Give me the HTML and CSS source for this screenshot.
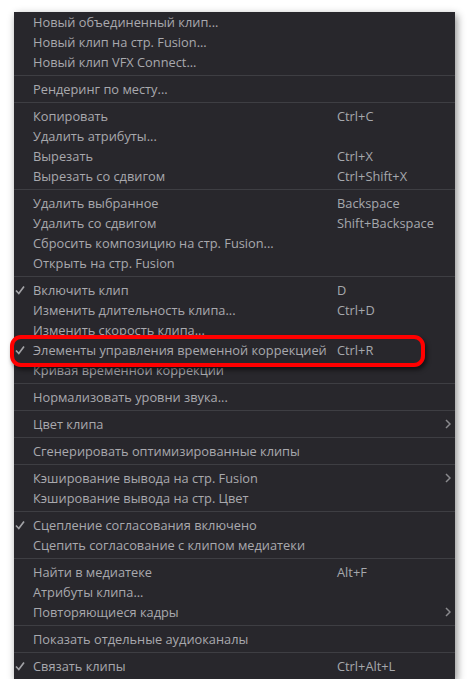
FILE: index.html
```html
<!DOCTYPE html>
<html lang="ru">
<head>
    <meta charset="UTF-8">
    <meta name="viewport" content="width=device-width, initial-scale=1.0">
    <title>Контекстное меню клипа</title>
    <link rel="stylesheet" href="styles.css">
</head>
<body>
    <div class="menu">
        <div class="item"><span class="check"></span><span class="label">Новый объединенный клип...</span></div>
        <div class="item"><span class="check"></span><span class="label">Новый клип на стр. Fusion...</span></div>
        <div class="item"><span class="check"></span><span class="label">Новый клип VFX Connect...</span></div>
        <div class="sep"></div>
        <div class="item"><span class="check"></span><span class="label">Рендеринг по месту...</span></div>
        <div class="sep"></div>
        <div class="item"><span class="check"></span><span class="label">Копировать</span><span class="key">Ctrl+C</span></div>
        <div class="item"><span class="check"></span><span class="label">Удалить атрибуты...</span></div>
        <div class="item"><span class="check"></span><span class="label">Вырезать</span><span class="key">Ctrl+X</span></div>
        <div class="item"><span class="check"></span><span class="label">Вырезать со сдвигом</span><span class="key">Ctrl+Shift+X</span></div>
        <div class="sep"></div>
        <div class="item"><span class="check"></span><span class="label">Удалить выбранное</span><span class="key">Backspace</span></div>
        <div class="item"><span class="check"></span><span class="label">Удалить со сдвигом</span><span class="key">Shift+Backspace</span></div>
        <div class="item"><span class="check"></span><span class="label">Сбросить композицию на стр. Fusion...</span></div>
        <div class="item"><span class="check"></span><span class="label">Открыть на стр. Fusion</span></div>
        <div class="sep"></div>
        <div class="item"><span class="check"><svg width="10" height="10" viewBox="0 0 10 10"><polyline points="1,5.5 3.8,8.5 9,1.5"/></svg></span><span class="label">Включить клип</span><span class="key">D</span></div>
        <div class="item"><span class="check"></span><span class="label">Изменить длительность клипа...</span><span class="key">Ctrl+D</span></div>
        <div class="item"><span class="check"></span><span class="label">Изменить скорость клипа...</span></div>
        <div class="item"><span class="check"><svg width="10" height="10" viewBox="0 0 10 10"><polyline points="1,5.5 3.8,8.5 9,1.5"/></svg></span><span class="label">Элементы управления временной коррекцией</span><span class="key">Ctrl+R</span></div>
        <div class="item"><span class="check"></span><span class="label">Кривая временной коррекции</span></div>
        <div class="sep"></div>
        <div class="item"><span class="check"></span><span class="label">Нормализовать уровни звука...</span></div>
        <div class="sep"></div>
        <div class="item"><span class="check"></span><span class="label">Цвет клипа</span><span class="key"></span><span class="arrow"><svg width="6" height="10" viewBox="0 0 6 10"><polyline points="1,1 5,5 1,9"/></svg></span></div>
        <div class="sep"></div>
        <div class="item"><span class="check"></span><span class="label">Сгенерировать оптимизированные клипы</span></div>
        <div class="sep"></div>
        <div class="item"><span class="check"></span><span class="label">Кэширование вывода на стр. Fusion</span><span class="key"></span><span class="arrow"><svg width="6" height="10" viewBox="0 0 6 10"><polyline points="1,1 5,5 1,9"/></svg></span></div>
        <div class="item"><span class="check"></span><span class="label">Кэширование вывода на стр. Цвет</span></div>
        <div class="sep"></div>
        <div class="item"><span class="check"><svg width="10" height="10" viewBox="0 0 10 10"><polyline points="1,5.5 3.8,8.5 9,1.5"/></svg></span><span class="label">Сцепление согласования включено</span></div>
        <div class="item"><span class="check"></span><span class="label">Сцепить согласование с клипом медиатеки</span></div>
        <div class="sep"></div>
        <div class="item"><span class="check"></span><span class="label">Найти в медиатеке</span><span class="key">Alt+F</span></div>
        <div class="item"><span class="check"></span><span class="label">Атрибуты клипа...</span></div>
        <div class="item"><span class="check"></span><span class="label">Повторяющиеся кадры</span><span class="key"></span><span class="arrow"><svg width="6" height="10" viewBox="0 0 6 10"><polyline points="1,1 5,5 1,9"/></svg></span></div>
        <div class="sep"></div>
        <div class="item"><span class="check"></span><span class="label">Показать отдельные аудиоканалы</span></div>
        <div class="sep"></div>
        <div class="item"><span class="check"><svg width="10" height="10" viewBox="0 0 10 10"><polyline points="1,5.5 3.8,8.5 9,1.5"/></svg></span><span class="label">Связать клипы</span><span class="key">Ctrl+Alt+L</span></div>
    </div>
    <div class="highlight"></div>
</body>
</html>
```

FILE: styles.css
```css
body {
    margin: 0;
    background-color: #ffffff;
    font-family: "Open Sans", "Noto Sans", sans-serif;
    font-size: 12.8px;
    position: relative;
}

.menu {
    margin: 14px 0 0 14px;
    width: 441px;
    padding: 0 0 3px 0;
    background-color: #28272c;
    color: #a9a9ae;
    box-shadow: 2px 3px 8px rgba(0, 0, 0, 0.45);
}

.item {
    display: grid;
    grid-template-columns: 19px 304px 1fr 16px;
    height: 20px;
    line-height: 20px;
    white-space: nowrap;
}

.item:first-child {
    margin-top: -2px;
}

.check {
    display: flex;
    align-items: center;
    padding-left: 1px;
}

.check svg,
.arrow svg {
    fill: none;
    stroke: #a2a2a6;
    stroke-width: 1.7;
}

.key {
    color: #a6a8ad;
}

.arrow {
    display: flex;
    align-items: center;
    padding-left: 6px;
}

.arrow svg {
    stroke: #8a8a8e;
    stroke-width: 1.5;
}

.sep {
    height: 1px;
    margin: 3px 0;
    background-color: #3e3e43;
}

.highlight {
    position: absolute;
    left: 10px;
    top: 335px;
    width: 415px;
    height: 32px;
    box-sizing: border-box;
    border: 4px solid #ff0000;
    border-radius: 11px;
    box-shadow: 2px 3px 4px rgba(0, 0, 0, 0.55);
}
```
